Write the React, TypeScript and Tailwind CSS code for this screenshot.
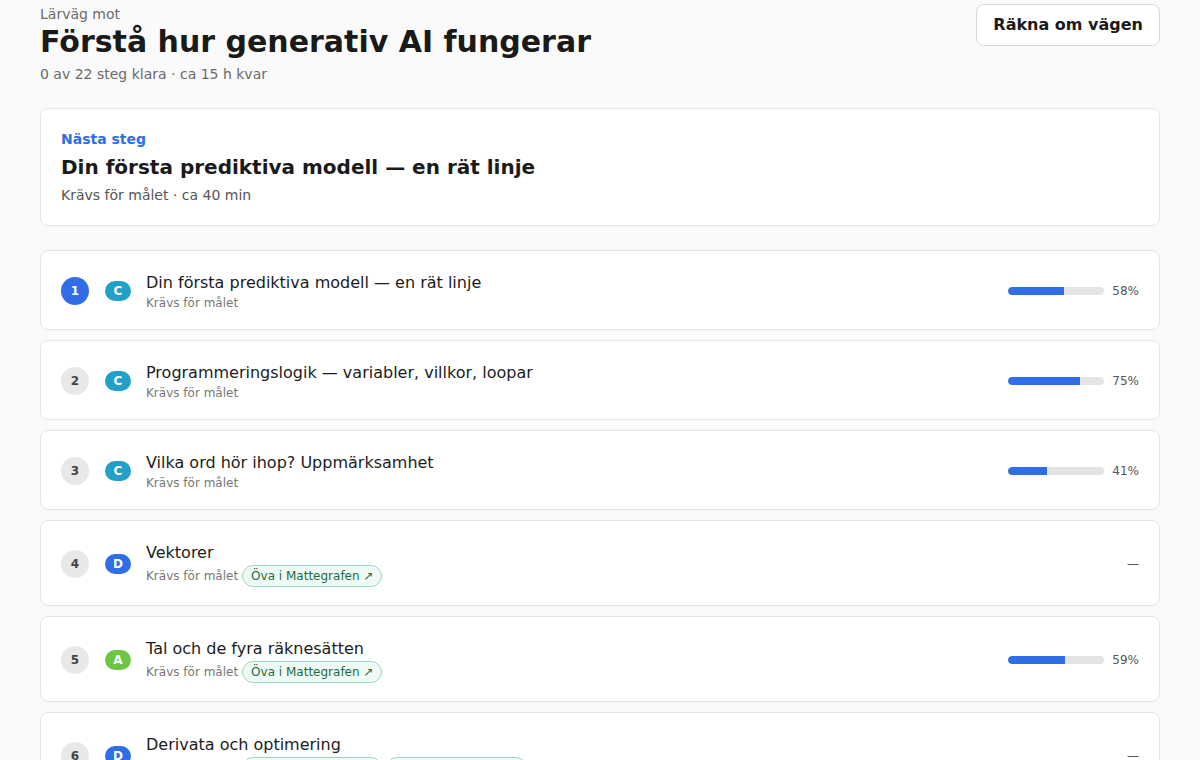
import React from 'react';

type Step = {
  title: string;
  level: 'A' | 'C' | 'D';
  progress: number | null;
  chips: string[];
  note?: string;
};

const steps: Step[] = [
  { title: 'Din första prediktiva modell — en rät linje', level: 'C', progress: 58, chips: [], note: 'Krävs för målet' },
  { title: 'Programmeringslogik — variabler, villkor, loopar', level: 'C', progress: 75, chips: [], note: 'Krävs för målet' },
  { title: 'Vilka ord hör ihop? Uppmärksamhet', level: 'C', progress: 41, chips: [], note: 'Krävs för målet' },
  { title: 'Vektorer', level: 'D', progress: null, chips: ['Öva i Mattegrafen ↗'], note: 'Krävs för målet' },
  { title: 'Tal och de fyra räknesätten', level: 'A', progress: 59, chips: ['Öva i Mattegrafen ↗'], note: 'Krävs för målet' },
  { title: 'Derivata och optimering', level: 'D', progress: null, chips: ['Öva i Mattegrafen ↗', 'Öva i Mattegrafen ↗'], note: 'Krävs för målet' },
  { title: 'Sannolikhet och statistik', level: 'C', progress: null, chips: [], note: 'Krävs för målet' },
];

const levelClass: Record<Step['level'], string> = {
  A: 'bg-[#6cc644]',
  C: 'bg-[#22a0c8]',
  D: 'bg-[#2f6ee6]',
};

const StepRow: React.FC<{ step: Step; index: number }> = ({ step, index }) => {
  const active = index === 0;
  return (
    <div className="flex items-center bg-white border border-[#e4e4e4] rounded-lg px-5 pt-5 pb-[18px]">
      {/* Step number */}
      <div
        className={
          active
            ? 'w-7 h-7 rounded-full bg-[#2f6ee6] text-white text-xs font-bold flex items-center justify-center shrink-0'
            : 'w-7 h-7 rounded-full bg-[#e8e8e8] text-[#444] text-xs font-bold flex items-center justify-center shrink-0'
        }
      >
        {index + 1}
      </div>

      {/* Level badge */}
      <div
        className={`ml-4 w-[26px] h-5 rounded-full ${levelClass[step.level]} text-white text-xs font-bold flex items-center justify-center shrink-0`}
      >
        {step.level}
      </div>

      {/* Title + meta */}
      <div className="ml-[15px] flex-1 min-w-0">
        <div className="text-base leading-6 text-[#1c1c1c]">{step.title}</div>
        {step.chips.length > 0 ? (
          <div className="flex items-center gap-1">
            <span className="text-xs leading-4 text-[#777]">{step.note}</span>
            {step.chips.map((chip, idx) => (
              <span
                key={idx}
                className="h-[22px] px-2 flex items-center rounded-full border border-[#93dcb9] bg-[#effaf4] text-xs text-[#1f6a46]"
              >
                {chip}
              </span>
            ))}
          </div>
        ) : (
          <div className="text-xs leading-4 text-[#777]">{step.note}</div>
        )}
      </div>

      {/* Progress */}
      {step.progress !== null ? (
        <div className="flex items-center gap-2 shrink-0">
          <div className="w-24 h-2 rounded-full bg-[#e4e4e4] overflow-hidden">
            <div className="h-full bg-[#2f6ee6] rounded-l-full" style={{ width: `${step.progress}%` }} />
          </div>
          <span className="w-[27px] text-right text-xs text-[#555]">{step.progress}%</span>
        </div>
      ) : (
        <span className="text-xs text-[#555] shrink-0">—</span>
      )}
    </div>
  );
};

export default function App() {
  return (
    <div className="min-h-screen bg-[#fafafa] font-['DejaVu_Sans',sans-serif] text-[#1c1c1c]">
      <div className="px-10 pt-1 pb-10">
        {/* Header */}
        <div className="flex items-start justify-between">
          <div>
            <div className="text-sm leading-5 text-[#6b6b6b]">Lärväg mot</div>
            <h1 className="text-3xl leading-9 font-bold text-[#1a1a1a]">Förstå hur generativ AI fungerar</h1>
            <div className="mt-1 text-sm leading-5 text-[#6b6b6b]">0 av 22 steg klara · ca 15 h kvar</div>
          </div>
          <button className="h-[42px] px-4 bg-white border border-[#d6d6d6] rounded-lg text-base font-bold text-[#1a1a1a]">
            Räkna om vägen
          </button>
        </div>

        {/* Next step card */}
        <div className="mt-6 bg-white border border-[#e4e4e4] rounded-lg p-5">
          <div className="text-sm leading-5 font-bold text-[#2f6ee6]">Nästa steg</div>
          <div className="mt-1 text-xl leading-7 font-bold text-[#1a1a1a]">
            Din första prediktiva modell — en rät linje
          </div>
          <div className="mt-1 text-sm leading-5 text-[#555]">Krävs för målet · ca 40 min</div>
        </div>

        {/* Step list */}
        <div className="mt-6 flex flex-col gap-[10px]">
          {steps.map((step, idx) => (
            <StepRow key={idx} step={step} index={idx} />
          ))}
        </div>
      </div>
    </div>
  );
}
